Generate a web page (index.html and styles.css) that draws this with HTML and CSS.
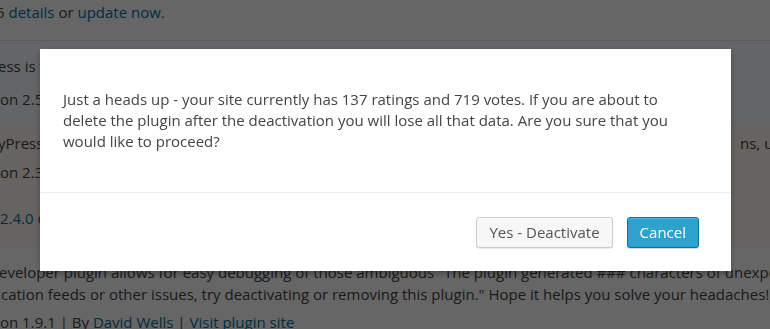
FILE: index.html
```html
<!DOCTYPE html>
<html>

<head>
    <meta charset="utf-8">
    <title>Plugins</title>
    <link rel="stylesheet" href="styles.css">
</head>

<body>
    <div id="plugins">
        <div class="row row-notice">
            <div class="line line-first"><span class="cut-5">5</span> <a href="#">details</a> or <a href="#">update now.</a></div>
        </div>
        <div class="row row-active">
            <div class="line line-name"><span class="cut-e">e</span>ss is free</div>
            <div class="line line-version">on 2.5.2</div>
        </div>
        <div class="row row-update">
            <div class="line line-split">
                <span class="split-left">yPress</span>
                <span class="split-right">ns, users</span>
            </div>
            <div class="line line-version2">on 2.3.1</div>
            <div class="line line-link"><a href="#">2.4.0 details</a></div>
        </div>
        <div class="row row-plain">
            <div class="line line-desc">eveloper plugin allows for easy debugging of those ambiguous "The plugin generated ### characters of unexpected output"</div>
            <div class="line line-desc2">cation feeds or other issues, try deactivating or removing this plugin." Hope it helps you solve your headaches!</div>
            <div class="line line-meta">on 1.9.1 | By <a href="#">David Wells</a> | <a href="#">Visit plugin site</a></div>
        </div>
    </div>

    <div id="backdrop"></div>

    <div id="dialog">
        <div class="dialog-body">
            Just a heads up - your site currently has 137 ratings and 719 votes. If you are about to delete the plugin after the deactivation you will lose all that data. Are you sure that you would like to proceed?
        </div>
        <div class="dialog-footer">
            <button class="button">Yes - Deactivate</button>
            <button class="button button-primary">Cancel</button>
        </div>
    </div>
</body>
</html>
```

FILE: styles.css
```css
* {
    box-sizing: border-box;
}

body {
    margin: 0;
    font-family: 'Open Sans', 'Noto Sans', sans-serif;
    font-size: 15px;
    color: #444;
    overflow: hidden;
    height: 329px;
    background-color: #fff;
}

a {
    color: #0074a2;
    text-decoration: none;
}

#plugins {
    width: 770px;
}

.row {
    overflow: hidden;
}

.line {
    white-space: nowrap;
    line-height: 20px;
}

.row-notice {
    height: 41px;
    padding-top: 2px;
    border-bottom: 1px solid #e1e1e1;
}

.cut-5 {
    margin-left: -4px;
}

.row-active {
    height: 83px;
    background-color: #f7fcfe;
    padding-top: 15px;
}

.cut-e {
    margin-left: -2px;
}

.line-version {
    margin-top: 13px;
}

.row-update {
    height: 124px;
    background-color: #fef7f1;
    padding-top: 9px;
}

.line-split {
    display: grid;
    grid-template-columns: 740px 1fr;
}

.split-left {
    overflow: hidden;
    margin-left: -2px;
}

.line-version2 {
    margin-top: 9px;
}

.line-link {
    margin-top: 26px;
}

.row-plain {
    padding-top: 14px;
}

.line-desc {
    margin-left: -1px;
}

.line-desc2 {
    margin-top: 2px;
    margin-left: 1px;
}

.line-meta {
    margin-top: 8px;
}

#backdrop {
    position: fixed;
    top: 0;
    left: 0;
    right: 0;
    bottom: 0;
    background-color: rgba(0, 0, 0, 0.6);
}

#dialog {
    position: fixed;
    top: 49px;
    left: 40px;
    width: 691px;
    background-color: #fff;
    box-shadow: 0 3px 6px rgba(0, 0, 0, 0.3);
}

.dialog-body {
    padding: 40px 50px 40px 23px;
    line-height: 21px;
    color: #444;
}

.dialog-footer {
    display: flex;
    justify-content: flex-end;
    gap: 14px;
    padding: 24px 32px 23px;
    border-top: 1px solid #eee;
}

.button {
    font-family: 'Open Sans', 'Noto Sans', sans-serif;
    font-size: 15px;
    height: 31px;
    line-height: 29px;
    padding: 0 12px;
    border: 1px solid #ccc;
    border-radius: 3px;
    background-color: #f7f7f7;
    color: #555;
    box-shadow: inset 0 1px 0 #fff, 0 1px 0 rgba(0, 0, 0, 0.08);
    cursor: pointer;
}

.button-primary {
    background-color: #2ea2cc;
    border-color: #0074a2;
    color: #fff;
    box-shadow: inset 0 1px 0 rgba(120, 200, 230, 0.5), 0 1px 0 rgba(0, 0, 0, 0.15);
}
```
